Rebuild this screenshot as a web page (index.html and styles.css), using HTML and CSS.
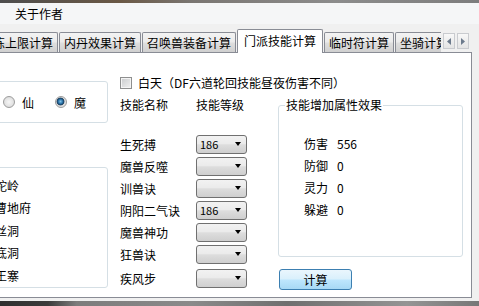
FILE: index.html
```html
<!DOCTYPE html>
<html lang="zh-CN">
<head>
    <meta charset="UTF-8">
    <title>门派技能计算</title>
    <link rel="stylesheet" href="styles.css">
</head>
<body>
    <div class="titlebar"></div>
    <div class="menubar"><span class="menu-item">关于作者</span></div>

    <div class="tabbar">
        <div class="tabs">
            <div class="tab">修炼上限计算</div>
            <div class="tab">内丹效果计算</div>
            <div class="tab">召唤兽装备计算</div>
            <div class="tab active">门派技能计算</div>
            <div class="tab">临时符计算</div>
            <div class="tab">坐骑计算</div>
        </div>
        <div class="tab-scroll">
            <span class="scroll-btn"><svg width="4" height="7" viewBox="0 0 4 7"><polygon points="4,0 0,3.5 4,7" fill="#6c7a8c"/></svg></span>
            <span class="scroll-btn"><svg width="4" height="7" viewBox="0 0 4 7"><polygon points="0,0 4,3.5 0,7" fill="#6c7a8c"/></svg></span>
        </div>
    </div>

    <div class="page">
        <div class="left">
            <div class="group race">
                <label class="radio"><span class="radio-dot"></span>人</label>
                <label class="radio"><span class="radio-dot"></span>仙</label>
                <label class="radio"><span class="radio-dot checked"></span>魔</label>
            </div>
            <div class="group schools">
                <div class="school"><span class="radio-dot"></span>狮驼岭</div>
                <div class="school"><span class="radio-dot"></span>阴曹地府</div>
                <div class="school"><span class="radio-dot"></span>盘丝洞</div>
                <div class="school"><span class="radio-dot"></span>无底洞</div>
                <div class="school"><span class="radio-dot"></span>魔王寨</div>
            </div>
        </div>

        <div class="main">
            <label class="check"><span class="checkbox"></span>白天（DF六道轮回技能昼夜伤害不同）</label>

            <div class="columns">
                <div class="skills">
                    <div class="skills-head">
                        <span class="skill-name">技能名称</span>
                        <span>技能等级</span>
                    </div>
                    <div class="skill-list">
                        <div class="skill-row"><span class="skill-name">生死搏</span><span class="combo">186</span></div>
                        <div class="skill-row"><span class="skill-name">魔兽反噬</span><span class="combo"></span></div>
                        <div class="skill-row"><span class="skill-name">训兽诀</span><span class="combo"></span></div>
                        <div class="skill-row"><span class="skill-name">阴阳二气诀</span><span class="combo">186</span></div>
                        <div class="skill-row"><span class="skill-name">魔兽神功</span><span class="combo"></span></div>
                        <div class="skill-row"><span class="skill-name">狂兽诀</span><span class="combo"></span></div>
                        <div class="skill-row last"><span class="skill-name">疾风步</span><span class="combo"></span></div>
                    </div>
                </div>

                <div class="effects">
                    <fieldset class="effect-box">
                        <legend>技能增加属性效果</legend>
                        <div class="effect-list">
                            <div class="effect-row"><span class="effect-name">伤害</span><span>556</span></div>
                            <div class="effect-row"><span class="effect-name">防御</span><span>0</span></div>
                            <div class="effect-row"><span class="effect-name">灵力</span><span>0</span></div>
                            <div class="effect-row"><span class="effect-name">躲避</span><span>0</span></div>
                        </div>
                    </fieldset>
                    <button class="calc-btn">计算</button>
                </div>
            </div>
        </div>
    </div>

    <div class="taskbar"></div>
</body>
</html>
```

FILE: styles.css
```css
* {
    box-sizing: border-box;
}

body {
    margin: 0;
    width: 479px;
    height: 306px;
    overflow: hidden;
    background: #f0f0f0;
    font-family: "Noto Sans CJK SC", "Noto Sans", sans-serif;
    font-size: 12px;
    color: #000;
}

.titlebar {
    height: 3px;
    background: linear-gradient(90deg, #4e4e4e, #6a5845 25%, #7a7672 40%, #8c8c8c 70%, #7d7d7d);
}

.menubar {
    height: 21px;
    line-height: 21px;
    padding-left: 15px;
    background: #f5f6f7;
}

/* tab strip */
.tabbar {
    display: flex;
    height: 29px;
}

.tabs {
    display: flex;
    align-items: flex-end;
    gap: 1px;
    width: 441px;
    overflow: hidden;
}

.tab {
    flex: none;
    height: 20px;
    margin-bottom: 1px;
    padding: 0 4px;
    line-height: 19px;
    border: 1px solid #898c95;
    border-bottom: none;
    border-radius: 2px 2px 0 0;
    background: linear-gradient(#f3f3f3, #ebebeb 48%, #dedede 52%, #d0d0d0);
    white-space: nowrap;
}

.tab:first-child {
    margin-left: -24px;
}

.tab.active {
    position: relative;
    z-index: 1;
    height: 24px;
    margin-bottom: 0;
    padding: 0 6px;
    line-height: 22px;
    background: #fff;
}

.tab-scroll {
    display: flex;
    gap: 2px;
    margin: 9px 0 0 2px;
}

.scroll-btn {
    display: flex;
    align-items: center;
    justify-content: center;
    width: 12px;
    height: 16px;
    border: 1px solid #c9cbcf;
    background: linear-gradient(#f8f8f8, #e4e4e4);
}

/* tab page */
.page {
    display: flex;
    width: 542px;
    height: 246px;
    margin: -1px 0 0 -70px;
    border: 1px solid #898c95;
    background: #fff;
}

.left {
    flex: 0 0 177px;
    padding: 28px 0 0 5px;
}

.group {
    width: 172px;
    border: 1px solid #d5dfe5;
    border-radius: 3px;
}

.race {
    display: flex;
    align-items: center;
    height: 42px;
    padding-left: 14px;
}

.radio {
    display: flex;
    align-items: center;
    gap: 7px;
    width: 52px;
}

.radio-dot {
    flex: none;
    width: 12px;
    height: 12px;
    border: 1px solid #9c9c9c;
    border-radius: 50%;
    background: radial-gradient(circle, #f6f6f6 0, #e4e4e4 55%, #d2d2d2 100%);
}

.radio-dot.checked {
    background: radial-gradient(circle at 45% 45%, #7fc3ea 0, #2b73a8 28%, #173a5a 45%, #dcdcdc 55%, #ececec 100%);
}

.schools {
    height: 121px;
    margin-top: 44px;
    padding: 6px 0 0 28px;
}

.school {
    display: flex;
    align-items: center;
    gap: 6px;
    height: 22.5px;
}

.main {
    flex: 1;
    padding: 23px 0 0 12px;
}

.check {
    display: flex;
    align-items: center;
    gap: 6px;
    height: 14px;
    line-height: 14px;
    white-space: nowrap;
}

.checkbox {
    flex: none;
    width: 12px;
    height: 12px;
    border: 1px solid #8e8f8f;
    background: linear-gradient(135deg, #c9cbcd, #f1f1f1);
    box-shadow: inset 0 0 0 1px #f4f4f4;
}

.columns {
    display: flex;
    margin-top: 8px;
}

.skills {
    flex: 0 0 158px;
}

.skills-head {
    display: flex;
    height: 14px;
    line-height: 14px;
}

.skill-name {
    flex: 0 0 76px;
    white-space: nowrap;
}

.skill-list {
    margin-top: 21px;
}

.skill-row {
    display: flex;
    align-items: center;
    height: 22px;
}

.skill-row.last {
    margin-top: 2px;
}

.combo {
    display: flex;
    align-items: center;
    width: 51px;
    height: 19px;
    padding: 0 5px 0 3px;
    border: 1px solid #707070;
    border-radius: 3px;
    background: linear-gradient(#f2f2f2, #ebebeb 45%, #dddddd 52%, #cfcfcf);
    font-size: 11px;
}

.combo::after {
    content: '';
    margin-left: auto;
    border-left: 3.5px solid transparent;
    border-right: 3.5px solid transparent;
    border-top: 4px solid #000;
}

.effects {
    flex: 0 0 185px;
}

.effect-box {
    width: 185px;
    margin: 0;
    padding: 0;
    border: 1px solid #d5dfe5;
    border-radius: 3px;
}

.effect-box legend {
    margin-left: 6px;
    padding: 0 1px;
    line-height: 14px;
}

.effect-list {
    padding: 20px 0 36px 25px;
}

.effect-row {
    display: flex;
    align-items: center;
    height: 22px;
}

.effect-name {
    flex: 0 0 33px;
}

.calc-btn {
    display: block;
    width: 73px;
    height: 21px;
    margin: 12px 0 0 1px;
    padding: 0;
    border: 1px solid #3c7fb1;
    border-radius: 3px;
    background: linear-gradient(#eaf6fd, #d9f0fc 48%, #bee6fd 52%, #a7d9f5);
    font: inherit;
    color: #000;
}

.taskbar {
    height: 6px;
    margin-top: 3px;
    background: linear-gradient(90deg, #2f2f2f, #3b3b3b 10%, #7c7c7c 16%, #8a8a8a 40%, #6f6f6f 60%, #949494 85%, #777);
}
```
